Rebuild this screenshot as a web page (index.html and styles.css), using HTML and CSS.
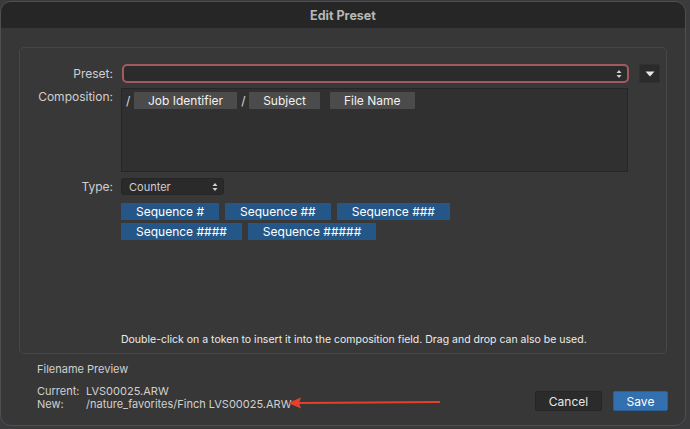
FILE: index.html
```html
<!DOCTYPE html>
<html>
<head>
<meta charset="utf-8">
<link rel="stylesheet" href="styles.css">
</head>
<body>
<div class="dialog">
  <div class="titlebar">Edit Preset</div>
  <div class="panel">
    <div class="row preset-row">
      <div class="label">Preset:</div>
      <div class="select preset-select">
        <span class="stepper"><svg width="6" height="9" viewBox="0 0 6 9"><path d="M3 0.5 L5.5 3.5 H0.5 Z M3 8.5 L5.5 5.5 H0.5 Z" fill="#cfcfcf"/></svg></span>
      </div>
      <div class="menu-btn"><svg width="10" height="6" viewBox="0 0 10 6"><path d="M0.5 0.5 H9.5 L5 5.5 Z" fill="#e6e6e6"/></svg></div>
    </div>
    <div class="row comp-row">
      <div class="label comp-label">Composition:</div>
      <div class="comp-box">
        <span class="slash">/</span>
        <span class="token">Job Identifier</span>
        <span class="slash">/</span>
        <span class="token">Subject</span>
        <span class="token spaced">File Name</span>
      </div>
    </div>
    <div class="row type-row">
      <div class="label">Type:</div>
      <div class="select type-select">
        <span class="select-text">Counter</span>
        <span class="stepper"><svg width="6" height="9" viewBox="0 0 6 9"><path d="M3 0.5 L5.5 3.5 H0.5 Z M3 8.5 L5.5 5.5 H0.5 Z" fill="#cfcfcf"/></svg></span>
      </div>
    </div>
    <div class="row seq-row">
      <div class="label"></div>
      <div class="seq-tokens">
        <div class="seq-line">
          <span class="seq">Sequence #</span>
          <span class="seq">Sequence ##</span>
          <span class="seq">Sequence ###</span>
        </div>
        <div class="seq-line">
          <span class="seq">Sequence ####</span>
          <span class="seq">Sequence #####</span>
        </div>
      </div>
    </div>
    <div class="spacer"></div>
    <div class="row hint-row">
      <div class="label"></div>
      <div class="hint">Double-click on a token to insert it into the composition field. Drag and drop can also be used.</div>
    </div>
  </div>
  <div class="footer">
    <div class="preview">
      <div class="preview-title">Filename Preview</div>
      <div class="preview-line"><span class="pkey">Current:</span><span>LVS00025.ARW</span></div>
      <div class="preview-line"><span class="pkey">New:</span><span>/nature_favorites/Finch LVS00025.ARW</span></div>
      <svg class="arrow" width="160" height="14" viewBox="0 0 160 14"><path d="M10 7 L152 6" stroke="#e5402c" stroke-width="2" fill="none"/><path d="M0 7 L13 1.5 L11 7 L13 12.5 Z" fill="#e5402c"/></svg>
    </div>
    <div class="buttons">
      <div class="btn cancel">Cancel</div>
      <div class="btn save">Save</div>
    </div>
  </div>
</div>
</body>
</html>
```

FILE: styles.css
```css
* { box-sizing: border-box; }
html, body { margin: 0; padding: 0; }
body {
  width: 690px;
  height: 429px;
  background: #3b3b3d;
  font-family: Inter, "Noto Sans", "Liberation Sans", sans-serif;
  overflow: hidden;
}
.dialog {
  width: 686px;
  height: 425px;
  margin-top: 1px;
  background: #373737;
  border: 1px solid #4f4f4f;
  border-radius: 11px;
  overflow: hidden;
  display: flex;
  flex-direction: column;
}
.titlebar {
  height: 26px;
  background: #262626;
  color: #b7b7b7;
  font-weight: 700;
  font-size: 12.5px;
  display: flex;
  align-items: center;
  justify-content: center;
  flex: none;
}
.panel {
  margin: 19px 18px 0 18px;
  height: 307px;
  border: 1px solid #474747;
  border-radius: 5px;
  background: #383838;
  display: flex;
  flex-direction: column;
  padding-top: 16px;
  flex: none;
}
.row {
  display: flex;
  align-items: center;
  gap: 8px;
}
.label {
  width: 93px;
  flex: none;
  text-align: right;
  color: #cfcfcf;
  font-size: 12px;
}
.select {
  position: relative;
  background: #2b2b2b;
  border-radius: 5px;
  display: flex;
  align-items: center;
}
.preset-select {
  width: 507px;
  height: 19px;
  margin-left: 1px;
  border: 2px solid #a35a5e;
}
.stepper {
  position: absolute;
  right: 5px;
  top: 50%;
  transform: translateY(-50%);
  display: flex;
}
.menu-btn {
  width: 21px;
  height: 19px;
  margin-left: 2px;
  background: #2b2b2b;
  border: 1px solid #303030;
  border-radius: 2px;
  display: flex;
  align-items: center;
  justify-content: center;
}
.comp-row {
  align-items: flex-start;
  margin-top: 5px;
}
.comp-label {
  padding-top: 1px;
}
.comp-box {
  width: 507px;
  height: 84px;
  background: #303030;
  border: 1px solid #262626;
  display: flex;
  align-items: flex-start;
  padding: 3px 0 0 4px;
}
.slash {
  color: #dcdcdc;
  font-size: 12px;
  line-height: 17px;
  width: 8px;
}
.token {
  background: #4b4b4b;
  color: #f2f2f2;
  font-size: 12px;
  line-height: 17px;
  height: 17px;
  padding: 0 14px;
  border-radius: 1px;
  margin-right: 2px;
}
.token + .slash { margin-left: 2px; }
.token.spaced { margin-left: 8px; }
.type-row {
  margin-top: 6px;
}
.type-select {
  width: 103px;
  height: 17px;
  border: 1px solid #262626;
  border-radius: 3px;
  background: #2a2a2a;
}
.select-text {
  color: #cfcfcf;
  font-size: 11px;
  padding-left: 7px;
}
.seq-row {
  margin-top: 8px;
  align-items: flex-start;
}
.seq-tokens {
  display: flex;
  flex-direction: column;
  gap: 3px;
}
.seq-line {
  display: flex;
  gap: 6px;
}
.seq {
  background: #245788;
  color: #ffffff;
  font-size: 12px;
  line-height: 17px;
  height: 17px;
  padding: 0 15px;
}
.spacer { flex: 1; }
.hint-row {
  margin-bottom: 6px;
}
.hint {
  color: #ececec;
  font-size: 10.5px;
  line-height: 14px;
}
.footer {
  flex: 1;
  display: flex;
  justify-content: space-between;
  padding: 8px 17px 0 36px;
}
.preview {
  position: relative;
  color: #d0d0d0;
  font-size: 11px;
}
.preview-title {
  line-height: 14px;
  margin-bottom: 9px;
}
.preview-line {
  display: flex;
  line-height: 13px;
}
.pkey { width: 49px; }
.arrow {
  position: absolute;
  left: 251px;
  top: 34px;
}
.buttons {
  display: flex;
  gap: 11px;
  padding-top: 29px;
}
.btn {
  height: 20px;
  font-size: 12px;
  color: #e6e6e6;
  display: flex;
  align-items: center;
  justify-content: center;
  border-radius: 2px;
}
.cancel {
  width: 67px;
  background: #2b2b2b;
  border: 1px solid #262626;
}
.save {
  width: 55px;
  background: #3370b0;
  color: #ffffff;
  border: 1px solid #2b5f96;
}
```
